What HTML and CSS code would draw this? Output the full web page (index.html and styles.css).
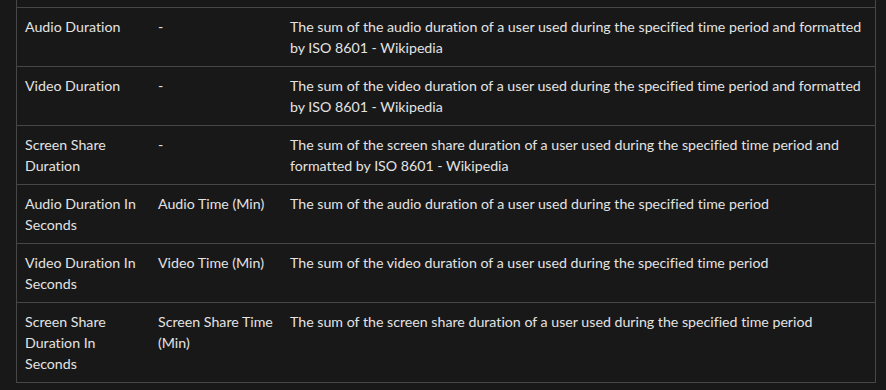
FILE: index.html
```html
<!DOCTYPE html>
<html lang="en">
<head>
<meta charset="utf-8">
<title>Usage fields</title>
<link rel="stylesheet" href="styles.css">
</head>
<body>
<table class="fields">
  <colgroup>
    <col class="c-name">
    <col class="c-display">
    <col class="c-desc">
  </colgroup>
  <tbody>
    <tr class="cut" aria-hidden="true"><td colspan="3"></td></tr>
    <tr><td>Audio Duration</td><td>-</td><td>The sum of the audio duration of a user used during the specified time period and formatted by ISO 8601 - Wikipedia</td></tr>
    <tr><td>Video Duration</td><td>-</td><td>The sum of the video duration of a user used during the specified time period and formatted by ISO 8601 - Wikipedia</td></tr>
    <tr><td>Screen Share Duration</td><td>-</td><td>The sum of the screen share duration of a user used during the specified time period and formatted by ISO 8601 - Wikipedia</td></tr>
    <tr><td>Audio Duration In Seconds</td><td>Audio Time (Min)</td><td>The sum of the audio duration of a user used during the specified time period</td></tr>
    <tr><td>Video Duration In Seconds</td><td>Video Time (Min)</td><td>The sum of the video duration of a user used during the specified time period</td></tr>
    <tr><td>Screen Share Duration In Seconds</td><td>Screen Share Time (Min)</td><td>The sum of the screen share duration of a user used during the specified time period</td></tr>
  </tbody>
</table>
</body>
</html>
```
FILE: styles.css
```css
html, body {
  margin: 0;
  padding: 0;
  background: #181818;
}
body {
  height: 390px;
  overflow: hidden;
  font-family: Lato, "Noto Sans", sans-serif;
  font-size: 14.2px;
  line-height: 21px;
  color: #e3e3e3;
  font-variant-ligatures: none;
}
.fields {
  box-sizing: border-box;
  width: 860px;
  margin: 0 0 0 16px;
  border: 1px solid #474747;
  border-top: 0;
  border-spacing: 0;
  border-collapse: separate;
  table-layout: fixed;
}
.c-name { width: 133px; }
.c-display { width: 132px; }
.fields td {
  padding: 8px;
  text-align: left;
  vertical-align: top;
  border-top: 1px solid #474747;
}
.fields .cut td {
  height: 7px;
  padding: 0;
  border-top: 0;
}
```
